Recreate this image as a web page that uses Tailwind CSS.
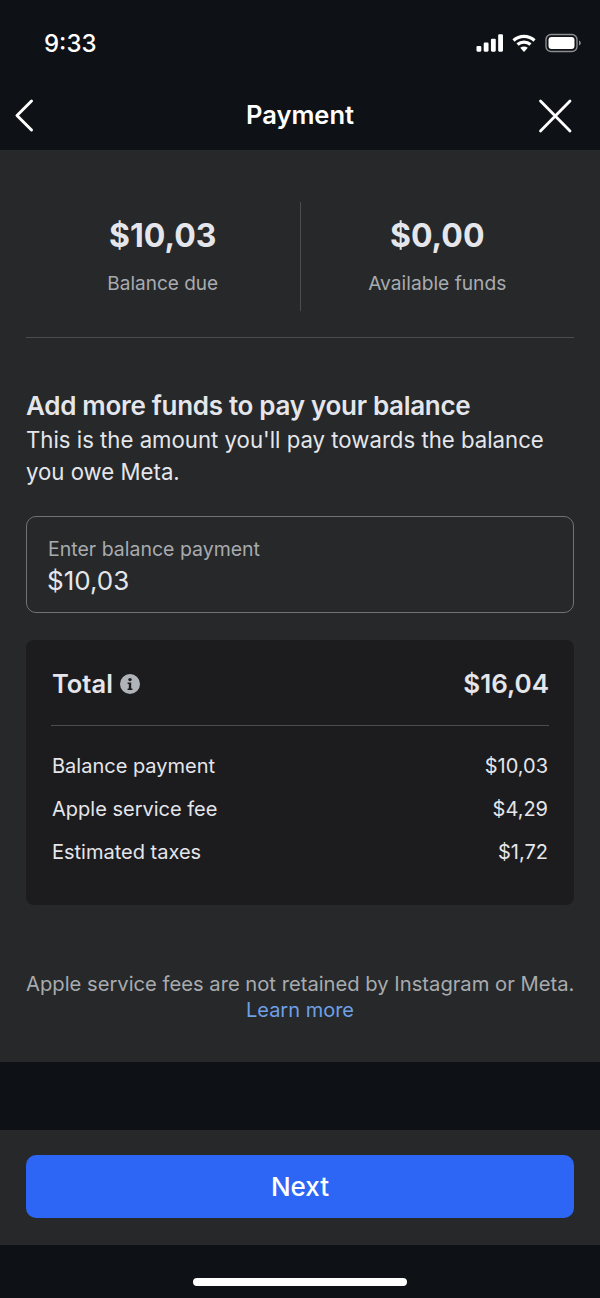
<!DOCTYPE html>
<html>
  <head>
    <meta charset="UTF-8" />
    <meta name="viewport" content="width=device-width, initial-scale=1.0" />
    <script src="https://cdn.jsdelivr.net/npm/@tailwindcss/browser@4"></script>
  </head>

  <body class="bg-[#0e1115] font-['Inter','Liberation_Sans',sans-serif] text-[#e4e6eb]">
    <div class="flex flex-col w-[600px] h-[1298px] overflow-hidden">
      <!-- status bar -->
      <div class="h-[84px] flex items-start justify-between pt-[28px] pl-[44px] pr-[19px]">
        <span class="text-[24px] leading-[32px] font-medium text-white">9:33</span>
        <div class="flex items-center mt-[5px]">
          <svg width="27" height="20" viewBox="0 0 28 20" fill="#fff">
            <rect x="0.5" y="13" width="5" height="6" rx="1.2" />
            <rect x="8" y="9.5" width="5" height="9.5" rx="1.2" />
            <rect x="15.5" y="5.5" width="5" height="13.5" rx="1.2" />
            <rect x="23" y="1" width="5" height="18" rx="1.2" />
          </svg>
          <svg width="24" height="20" viewBox="0 0 24 20" fill="none" stroke="#fff" stroke-width="3.2" class="ml-[9px]">
            <path d="M1.5 7.5C7.5 1.9 16.5 1.9 22.5 7.5" />
            <path d="M5.5 11.5C9.3 8.2 14.7 8.2 18.5 11.5" />
            <path d="M12 19l-3.8-4.2c2.3-1.7 5.3-1.7 7.6 0z" fill="#fff" stroke="none" />
          </svg>
          <svg width="36" height="20" viewBox="0 0 36 20" fill="none" class="ml-[9px]">
            <rect x="1" y="1.5" width="31" height="17" rx="5" stroke="#8b8d90" stroke-width="1.4" />
            <rect x="3.5" y="4" width="26" height="12" rx="3" fill="#fff" />
            <path d="M34 7.5c1.2.4 1.8 1.3 1.8 2.5s-.6 2.1-1.8 2.5z" fill="#8b8d90" />
          </svg>
        </div>
      </div>

      <!-- nav -->
      <div class="h-[66px] relative flex items-center justify-between pl-[14px] pr-[27px]">
        <svg width="20" height="36" viewBox="0 0 20 36" fill="none" stroke="#fff" stroke-width="3" stroke-linecap="round" stroke-linejoin="round" class="mt-[-2px]">
          <path d="M17.5 3L3 17.5l14.5 14.5" />
        </svg>
        <span class="absolute left-0 right-0 top-[15px] text-center text-[25.5px] leading-[32px] font-semibold text-white">Payment</span>
        <svg width="36" height="36" viewBox="0 0 36 36" fill="none" stroke="#fff" stroke-width="2.8" stroke-linecap="round" class="mt-[-2px]">
          <path d="M3.5 3l29.5 30M33 3L3.5 33" />
        </svg>
      </div>

      <!-- main content -->
      <div class="h-[912px] bg-[#26282a] px-[26px] pt-[52px] flex flex-col">
        <div class="flex h-[109px] items-start">
          <div class="flex-1 flex flex-col items-center pt-[14px] pr-[1px]">
            <span class="text-[32px] leading-[40px] font-bold text-[#e4e6eb]">$10,03</span>
            <span class="mt-[16px] text-[19px] leading-[24px] text-[#a8abaf]">Balance due</span>
          </div>
          <div class="w-px h-[109px] bg-[#4a4c4f] ml-[-1px]"></div>
          <div class="flex-1 flex flex-col items-center pt-[14px]">
            <span class="text-[32px] leading-[40px] font-bold text-[#e4e6eb]">$0,00</span>
            <span class="mt-[15px] text-[19.2px] leading-[24px] text-[#a8abaf]">Available funds</span>
          </div>
        </div>
        <div class="h-px bg-[#4a4c4f] mt-[26px]"></div>

        <h2 class="mt-[52px] text-[26px] leading-[32px] font-semibold tracking-[-0.3px] text-[#e4e6eb]">Add more funds to pay your balance</h2>
        <p class="mt-[2px] text-[22.2px] leading-[32px] text-[#e4e6eb] whitespace-nowrap">This is the amount you'll pay towards the balance<br />you owe Meta.</p>

        <div class="mt-[28px] h-[97px] border border-[#707275] rounded-[10px] pl-[21px] pt-[19px]">
          <div class="text-[19.5px] leading-[26px] text-[#a8abaf]">Enter balance payment</div>
          <div class="mt-[2px] ml-[-1px] text-[26px] leading-[34px] text-[#e4e6eb]">$10,03</div>
        </div>

        <div class="mt-[27px] h-[265px] bg-[#1c1c1e] rounded-[8px] pl-[26px] pr-[25px] pt-[27px]">
          <div class="flex items-center justify-between h-[34px]">
            <div class="flex items-center gap-[7px]">
              <span class="text-[25.5px] leading-[34px] font-semibold text-[#e4e6eb]">Total</span>
              <svg width="20" height="20" viewBox="0 0 20 20">
                <circle cx="10" cy="10" r="10" fill="#b0b3b8" />
                <circle cx="10" cy="5.6" r="1.7" fill="#1c1c1e" />
                <path d="M7.6 8.4h3.6v6h1.2v1.6H7.6v-1.6h1.2v-4.4H7.6z" fill="#1c1c1e" />
              </svg>
            </div>
            <span class="text-[26px] leading-[34px] font-semibold text-[#e4e6eb]">$16,04</span>
          </div>
          <div class="h-px bg-[#4a4c4f] mt-[24px] ml-[-1px]"></div>
          <div class="mt-[26px] flex flex-col gap-[14px] text-[20px] leading-[29px] text-[#e4e6eb]">
            <div class="flex justify-between pr-[1px]"><span>Balance payment</span><span>$10,03</span></div>
            <div class="flex justify-between pr-[1px]"><span>Apple service fee</span><span>$4,29</span></div>
            <div class="flex justify-between pr-[1px]"><span>Estimated taxes</span><span>$1,72</span></div>
          </div>
        </div>

        <div class="mt-[66px] text-center text-[20.2px] leading-[26px] text-[#a8abaf] whitespace-nowrap">
          <div>Apple service fees are not retained by Instagram or Meta.</div>
          <div class="text-[#6ea0e8] text-[20px]">Learn more</div>
        </div>
      </div>

      <div class="h-[68px]"></div>

      <!-- footer -->
      <div class="h-[115px] bg-[#26282a] px-[26px] pt-[25px]">
        <button class="w-full h-[63px] bg-[#2d66f5] rounded-[10px] text-white text-[26px] font-medium">Next</button>
      </div>

      <!-- home indicator -->
      <div class="flex-1 flex justify-center pt-[33px]">
        <div class="w-[214px] h-[8px] bg-white rounded-full"></div>
      </div>
    </div>
  </body>
</html>
